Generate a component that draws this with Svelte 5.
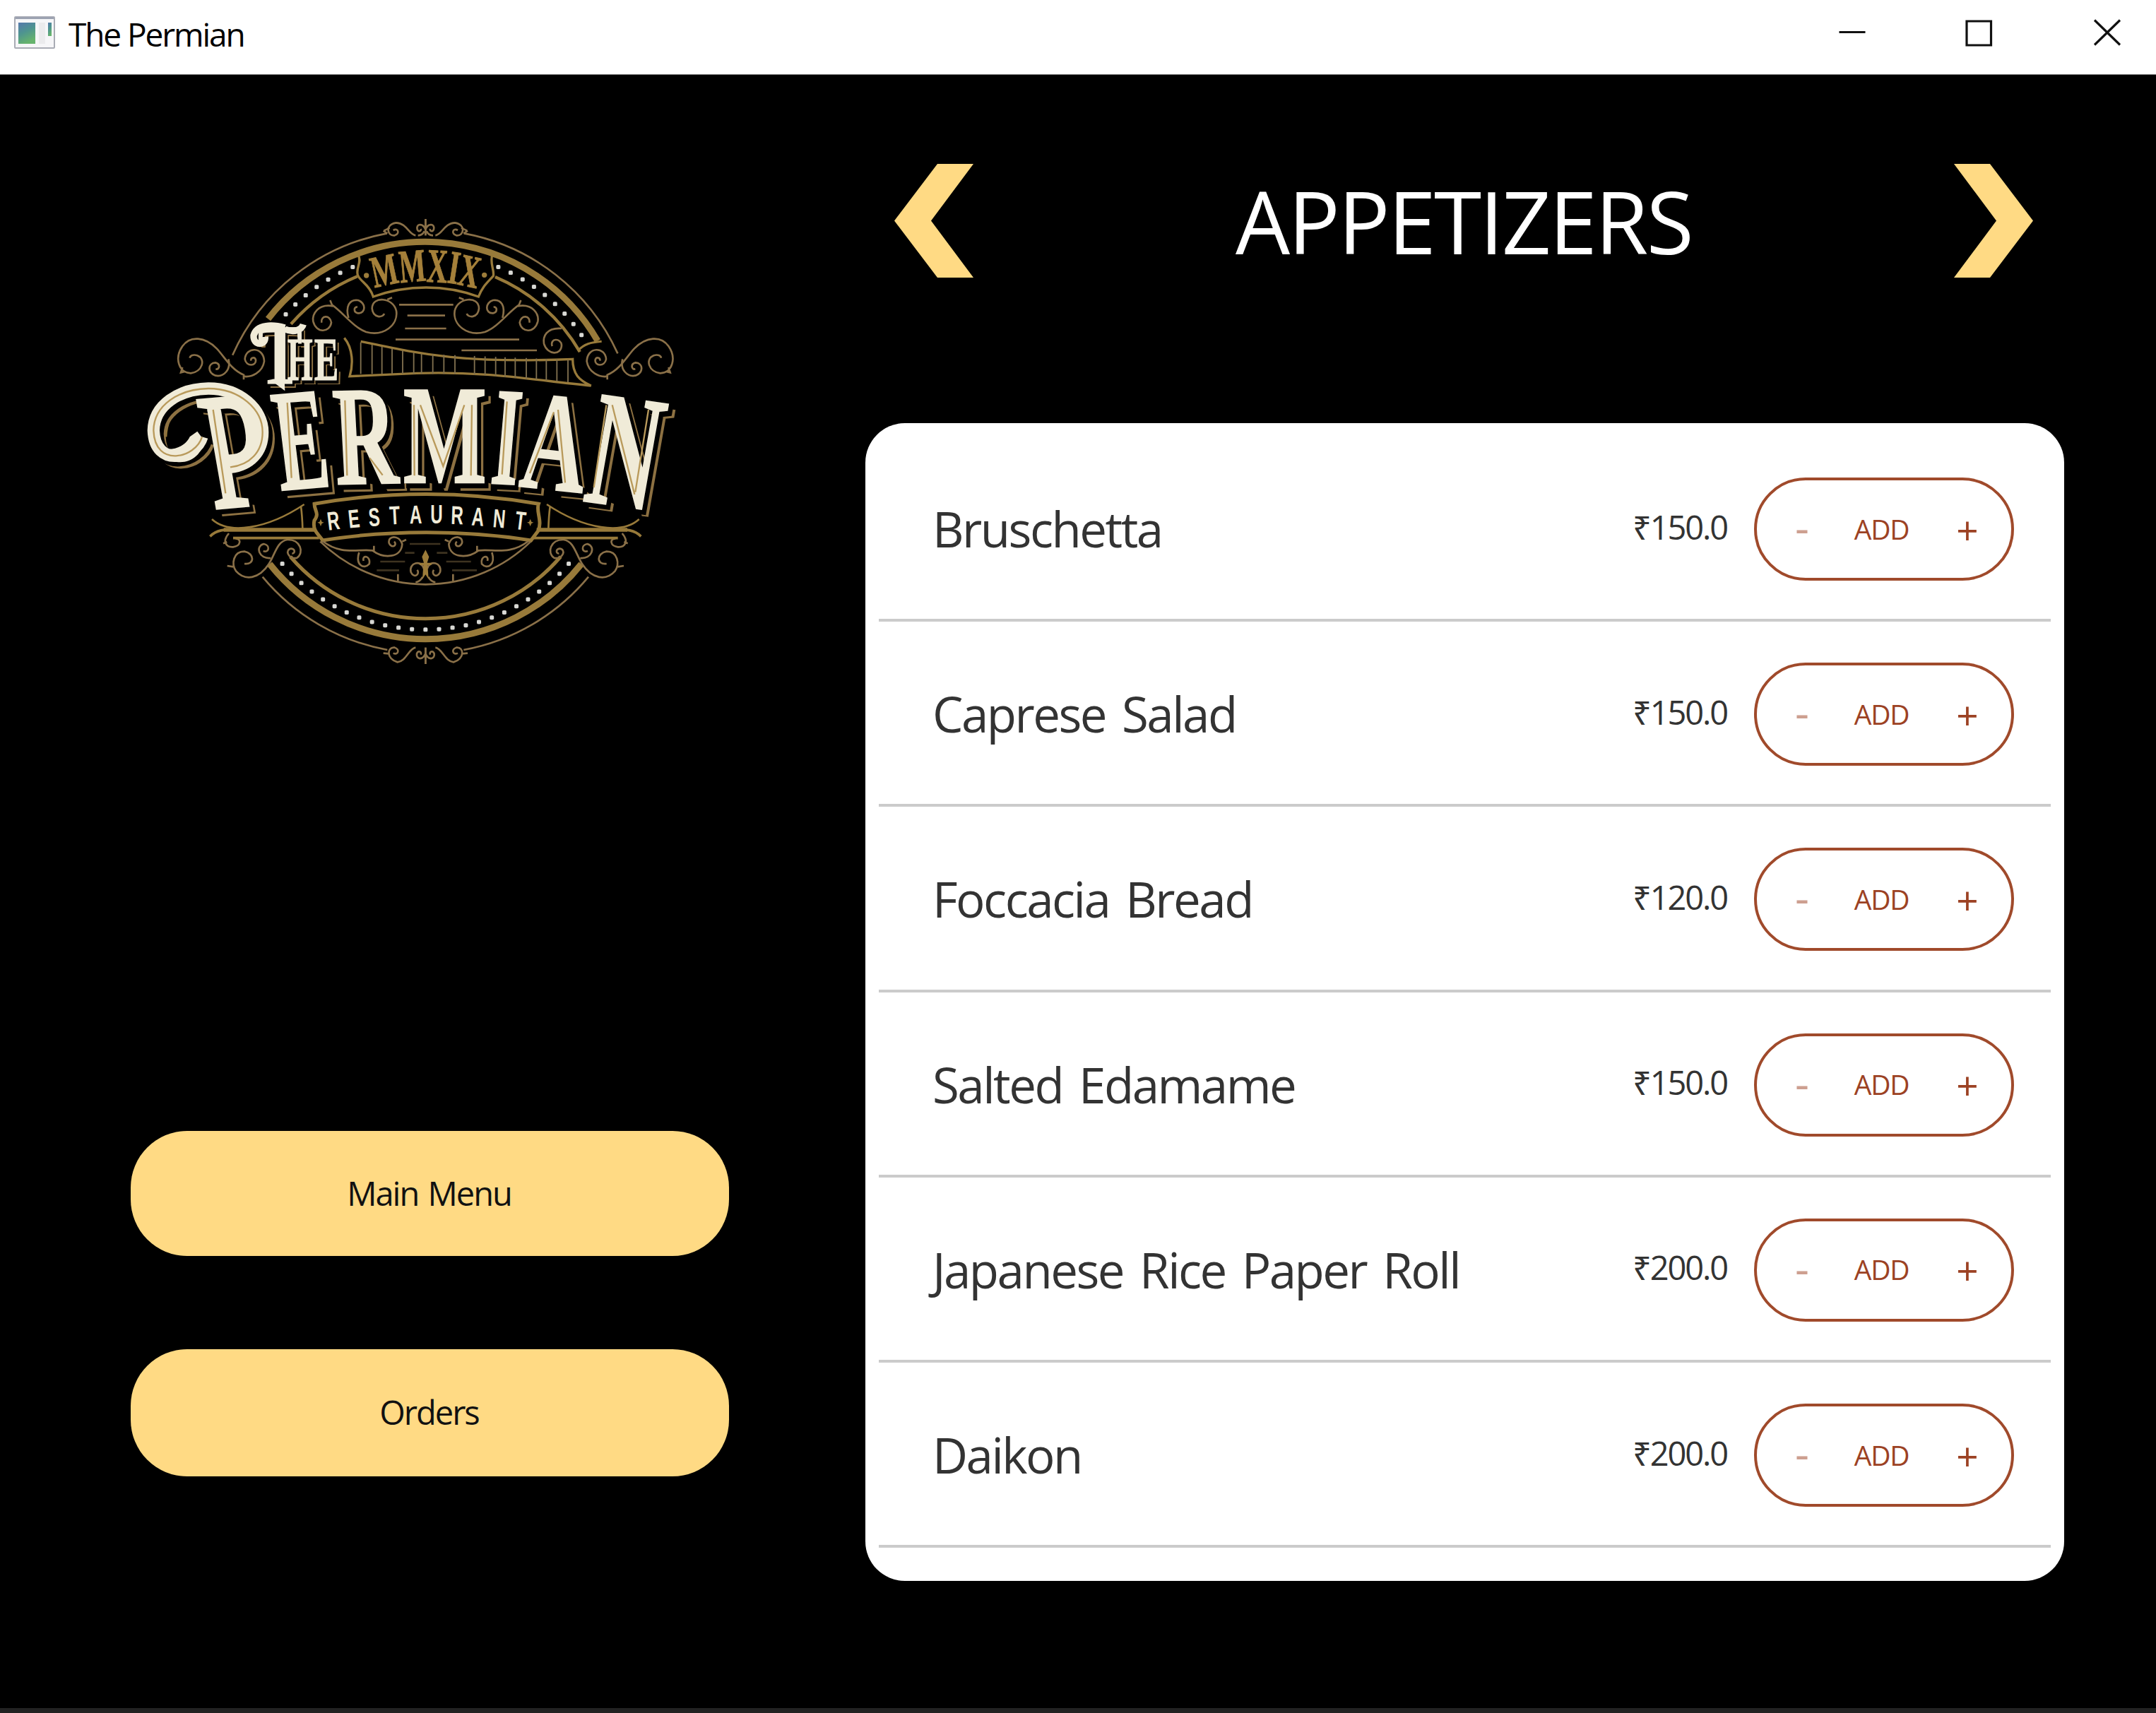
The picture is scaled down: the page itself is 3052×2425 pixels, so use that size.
<script>
  const items = [
    { name: 'Bruschetta', price: '150.0' },
    { name: 'Caprese Salad', price: '150.0' },
    { name: 'Foccacia Bread', price: '120.0' },
    { name: 'Salted Edamame', price: '150.0' },
    { name: 'Japanese Rice Paper Roll', price: '200.0' },
    { name: 'Daikon', price: '200.0' }
  ];

  // Emblem geometry: concentric rings around one centre
  const CX = 1237;
  const CY = 1003;
  const at = (deg, r) => {
    const a = (deg * Math.PI) / 180;
    return [CX + r * Math.cos(a), CY - r * Math.sin(a)];
  };
  const arc = (from, to, r) => {
    const [x1, y1] = at(from, r);
    const [x2, y2] = at(to, r);
    return `M${x1} ${y1} A${r} ${r} 0 0 1 ${x2} ${y2}`;
  };
  const run = (from, to, n) =>
    Array.from({ length: n }, (_, i) => at(from + ((to - from) * i) / (n - 1), 801));
  const beads = [...run(137.8, 112.7, 7), ...run(67.3, 34.2, 9), ...run(-40.6, -139.4, 25)];

  // Lettering: c = character, x/y = baseline start, w = width, h = cap height, r = rotation, k = skew
  const permian = [
    { c: 'P', x: 336, y: 1286, w: 262, h: 456, r: -5, k: 5, light: true },
    { c: 'E', x: 622, y: 1213, w: 222, h: 405, r: -5, k: 2 },
    { c: 'R', x: 858, y: 1186, w: 268, h: 393, r: -1, k: 2 },
    { c: 'M', x: 1142, y: 1180, w: 354, h: 393, r: 0, k: 0 },
    { c: 'I', x: 1508, y: 1182, w: 116, h: 390, r: 3, k: -2 },
    { c: 'A', x: 1630, y: 1194, w: 276, h: 392, r: 6, k: 0 },
    { c: 'N', x: 1900, y: 1256, w: 298, h: 456, r: 8, k: -2 }
  ];
  const the = [
    { c: 'T', x: 524, y: 758, w: 190, h: 238, r: 0, k: 0 },
    { c: 'H', x: 650, y: 744, w: 108, h: 172, r: 0, k: 0 },
    { c: 'E', x: 764, y: 744, w: 104, h: 172, r: 0, k: 0 }
  ];
  const year = [
    { c: 'M', x: 1020, y: 352, w: 112, h: 124, r: -12, k: 0 },
    { c: 'M', x: 1131, y: 331, w: 112, h: 130, r: -5, k: 0 },
    { c: 'X', x: 1240, y: 326, w: 88, h: 134, r: 3, k: 0 },
    { c: 'I', x: 1326, y: 329, w: 46, h: 132, r: 9, k: 0 },
    { c: 'X', x: 1368, y: 337, w: 88, h: 128, r: 12, k: 0 }
  ];
  const restaurant = [
    { c: 'R', x: 850, y: 1379, r: -7 },
    { c: 'E', x: 937, y: 1371, r: -6 },
    { c: 'S', x: 1022, y: 1364, r: -4 },
    { c: 'T', x: 1108, y: 1356, r: -3 },
    { c: 'A', x: 1196, y: 1353, r: -1 },
    { c: 'U', x: 1284, y: 1353, r: 0 },
    { c: 'R', x: 1370, y: 1356, r: 2 },
    { c: 'A', x: 1457, y: 1362, r: 4 },
    { c: 'N', x: 1547, y: 1370, r: 5 },
    { c: 'T', x: 1636, y: 1379, r: 7 }
  ];
  const cables = [
    962, 1010, 1052, 1095, 1140, 1187, 1220, 1268, 1315, 1362, 1445, 1490, 1535, 1575, 1618, 1665,
    1708, 1750, 1795, 1842
  ];
  const swash =
    'M288 985 C262 1075 88 1120 82 958 C84 850 190 782 315 780 C450 780 545 870 545 965 C545 1050 490 1105 408 1114';
</script>

{#snippet glyphs(list, cap)}
  {#each list as g}
    <text
      class:light={g.light}
      transform="translate({g.x} {g.y}) rotate({g.r}) skewX({g.k})"
      font-size={g.h / cap}
      textLength={g.w}
      lengthAdjust="spacingAndGlyphs">{g.c}</text>
  {/each}
{/snippet}

{#snippet flourishes()}
  <g class="fine">
    <path d="M1195 130 C1165 125 1158 78 1112 76 C1065 82 1072 134 1106 130 C1130 122 1120 96 1100 108" />
    <path d="M1060 110 L1085 98 M1075 122 L1058 110" />
    <path d="M1237 60 V130 M1237 104 C1225 76 1196 80 1202 104 C1208 118 1220 110 1217 102 M1205 130 C1220 130 1228 122 1232 112" />
    <path d="M465 742 V722 C410 700 380 640 350 610 C300 560 238 554 205 600 C170 650 188 712 240 715 C290 708 305 655 268 640 C250 634 238 640 236 650 M205 690 L198 712 L215 708" />
    <path d="M400 655 C412 700 380 732 345 725 C310 712 312 672 345 670 C368 675 362 702 346 697" />
    <path d="M462 728 C500 735 545 710 552 665 C550 600 474 602 470 655 C475 688 520 686 516 658 C512 644 494 648 496 662" />
    <path d="M845 430 C780 418 755 465 760 495 C772 545 830 545 837 500 C832 464 790 470 796 500" />
    <path d="M832 405 L840 425 C885 455 930 520 985 540 C1060 560 1122 510 1113 450 C1100 392 1010 385 1010 440 C1014 482 1056 480 1062 462 M1075 402 L1095 394" />
    <path d="M910 480 C896 430 915 400 950 405 C985 415 985 462 950 460 C930 455 932 432 948 434" />
    <path d="M402 1395 C372 1430 390 1455 420 1453 C455 1448 455 1416 430 1418 M378 1438 L394 1432" />
    <path d="M468 1524 C512 1530 512 1480 468 1472 C420 1472 412 1525 432 1555 C470 1598 530 1590 572 1525 C600 1480 606 1430 650 1422 C706 1420 724 1478 690 1500 C652 1506 638 1462 668 1460 C686 1464 682 1482 670 1480 M395 1533 L425 1538" />
    <path d="M580 1500 C530 1506 512 1450 550 1440 C580 1446 572 1480 548 1470" />
    <path d="M800 1428 C880 1490 950 1460 1012 1468 C1060 1504 1135 1500 1138 1440 C1124 1400 1076 1404 1082 1436 C1092 1462 1120 1446 1104 1430 M1138 1430 L1155 1422 M1018 1470 V1448" />
    <path d="M955 1476 C938 1530 975 1550 998 1525 C1006 1490 966 1484 974 1512" />
    <path d="M1120 1598 V1568 M1225 1580 C1215 1598 1205 1602 1195 1603" />
    <path d="M1230 1545 C1218 1505 1165 1520 1175 1560 C1188 1588 1215 1570 1202 1550" />
    <path d="M1195 1880 C1165 1885 1155 1938 1118 1942 C1070 1930 1072 1876 1106 1880 C1130 1888 1120 1914 1100 1904 M1058 1904 L1080 1906" />
    <path d="M1237 1950 V1880 M1237 1906 C1225 1936 1196 1930 1200 1906 C1206 1890 1222 1898 1217 1910" />
  </g>
  <g class="gold">
    <path stroke-width="8" d="M330 1335 C400 1400 560 1380 722 1272 M708 1280 C712 1310 714 1340 715 1375" />
    <path stroke-width="16" d="M380 1380 H765" />
    <path stroke-width="11" d="M322 1408 C350 1380 380 1378 440 1380" />
    <path stroke-width="11" d="M420 1415 H785" />
  </g>
{/snippet}

<div class="window">
  <header class="titlebar">
    <svg class="app-icon" viewBox="0 0 58 46">
      <defs>
        <linearGradient id="pane" x1="0" y1="0" x2=".4" y2="1">
          <stop offset="0" stop-color="#5578ad" />
          <stop offset=".5" stop-color="#4e9490" />
          <stop offset="1" stop-color="#66b36d" />
        </linearGradient>
      </defs>
      <rect x="1" y="1" width="56" height="44" rx="1" fill="#f6f6f8" stroke="#a9acb5" stroke-width="2" />
      <rect x="2" y="1" width="54" height="3" fill="#9da3b2" />
      <rect x="6" y="9" width="24" height="30" fill="url(#pane)" />
      <rect x="35" y="9" width="9" height="30" fill="#ebebed" />
      <rect x="48" y="9" width="5" height="19" fill="url(#pane)" />
    </svg>
    <span class="title">The Permian</span>
    <div class="controls">
      <svg viewBox="0 0 40 40"><path d="M2.5 21H39.5" /></svg>
      <svg viewBox="0 0 40 40"><path d="M2 5.5H36.5V39.5H2Z" /></svg>
      <svg viewBox="0 0 40 40"><path d="M2 4L38 39M38 4L2 39" /></svg>
    </div>
  </header>

  <main>
    <aside>
      <svg class="logo" viewBox="0 0 2400 2010">
        <g class="gold">
          <path stroke-width="27" d={arc(142.2, 30.2, 846)} />
          <path stroke-width="13" d={arc(139, 112.5, 757)} />
          <path stroke-width="13" d={arc(67, 30, 757)} />
          <path stroke-width="9" d="M1884 620 C1910 590 1940 584 1985 580" />
          <path stroke-width="27" d="M575 1525 A846 846 0 0 0 1899 1525" />
          <path stroke-width="15" d="M663 1494 A757 757 0 0 0 1811 1494" />
          <path stroke-width="10" d="M952 215 C968 245 938 270 950 300 C960 325 1000 340 1015 390 C1160 338 1320 338 1462 390 C1480 345 1500 330 1525 302 C1530 275 1510 250 1520 215" />
          <path stroke-width="15" d="M765 1270 C1080 1215 1400 1215 1717 1270 C1705 1300 1735 1345 1715 1385 L1685 1425 C1400 1380 1080 1380 800 1425 C785 1400 755 1385 765 1340 C788 1310 765 1300 765 1270Z" />
          <path stroke-width="10" d="M962 580 C1200 630 1380 675 1862 655 C1862 720 1890 745 1940 768 C1700 745 1500 705 1200 715 L915 728 C930 680 930 610 892 565" />
          <path stroke-width="8" d="M135 985 C140 870 240 780 400 805" />
        </g>
        <g class="fine">
          <path d={arc(156, 100.5, 897)} />
          <path d={arc(79.5, 24.5, 897)} />
          <path d="M545 1580 A900 900 0 0 0 1075 1890" />
          <path d="M1399 1890 A900 900 0 0 0 1929 1580" />
          <path d="M790 1430 A640 640 0 0 0 1684 1430" />
          <path d="M1125 424H1355M1160 470H1320M1150 525H1325M1110 572H1635M1390 618H1710" />
          <path d="M1815 525 C1750 520 1735 560 1740 590 C1755 640 1815 640 1815 595 C1812 565 1764 565 1775 600" />
          <path opacity=".45" d="M1170 1440H1300M1150 1478H1190M1285 1478H1330M1045 1515H1150M1325 1515H1430M1030 1552H1125M1350 1552H1455" />
        </g>
        <g class="cable">
          {#each cables as x}
            <path d="M{x} {x < 1200 ? 585 + (x - 962) * 0.19 : 632 + (x - 1200) * 0.04}V{x < 1400 ? 718 : 718 + (x - 1400) * 0.08}" />
          {/each}
        </g>

        {@render flourishes()}
        <g transform="translate(2474 0) scale(-1 1)">{@render flourishes()}</g>

        <path class="solid" d="M1237 1465 L1252 1495 L1244 1520 H1262 V1530 H1246 L1250 1590 L1237 1570 L1224 1590 L1228 1530 H1212 V1520 H1230 L1222 1495Z" />
        <circle class="solid" cx="986" cy="300" r="11" />
        <circle class="solid" cx="1487" cy="298" r="11" />
        <path class="solid" d="M792 1334l5 12 9 3-9 4-5 12-5-12-9-4 9-3ZM1682 1334l5 12 9 3-9 4-5 12-5-12-9-4 9-3Z" />

        {#each beads as [x, y]}
          <rect class="bead" x={x - 9} y={y - 9} width="18" height="18" rx="5" />
        {/each}

        <g class="year">{@render glyphs(year, 0.655)}</g>

        <!-- drop outline, black separation, then the cream face -->
        <g class="drop" transform="translate(26 28)">
          <path d={swash} />
          {@render glyphs(permian, 0.655)}
        </g>
        <g class="gap" transform="translate(13 15)">
          <path d={swash} />
          {@render glyphs(permian, 0.655)}
        </g>
        <g class="drop small" transform="translate(14 16)">{@render glyphs(the, 0.655)}</g>
        <g class="gap small" transform="translate(6 8)">{@render glyphs(the, 0.655)}</g>
        <g class="face">
          <path d={swash} />
          <path class="blob" d="M268 962 L296 1000 C290 1060 240 1100 180 1092 C130 1085 95 1050 80 1010 C130 1060 215 1035 236 985Z" />
          {@render glyphs(permian, 0.655)}
        </g>
        <g class="face small">
          <path d="M640 522 C590 508 520 505 507 555 C505 600 560 600 556 560" />
          <path d="M640 528 C680 545 712 530 718 508" />
          <path class="blob" d="M586 740 H638 L640 790 L590 752Z" />
          {@render glyphs(the, 0.655)}
        </g>
        <g class="inline">
          <path d={swash} />
          <path d="M335 870 L388 1225M650 840 L668 1160M895 830 L904 1150M1188 850 L1190 1150M1215 850 L1312 1110 L1402 850M1434 850 L1430 1150M1583 835 L1562 1145M1782 880 L1680 1140M1800 870 L1830 1180M2005 850 L1952 1200M2030 850 L2125 1230M2184 870 L2128 1220M1000 1075 L1055 1148" />
        </g>

        <g class="rest">
          {#each restaurant as g}
            <text transform="translate({g.x} {g.y}) rotate({g.r}) scale(.66 1)" text-anchor="middle">{g.c}</text>
          {/each}
        </g>
      </svg>

      <nav>
        <button class="main-menu">Main Menu</button>
        <button class="orders">Orders</button>
      </nav>
    </aside>

    <section>
      <div class="category">
        <svg class="arrow" viewBox="0 0 112 161"><path d="M61 0H112L52 80.5L112 161H61L0 80.5Z" /></svg>
        <h1>APPETIZERS</h1>
        <svg class="arrow" viewBox="0 0 112 161"><path d="M51 0H0L60 80.5L0 161H51L112 80.5Z" /></svg>
      </div>

      <ul>
        {#each items as item}
          <li>
            <span class="name">{item.name}</span>
            <span class="price">₹{item.price}</span>
            <div class="pill">
              <span class="minus">-</span>
              <span class="add">ADD</span>
              <span class="plus">+</span>
            </div>
          </li>
        {/each}
      </ul>
    </section>
  </main>
  <footer></footer>
</div>

<style>
  :global(body) {
    margin: 0;
    background: #000;
  }
  .window {
    width: 3052px;
    height: 2425px;
    display: flex;
    flex-direction: column;
    background: #000;
    font-family: 'Open Sans', 'Noto Sans', sans-serif;
    overflow: hidden;
  }
  .titlebar {
    box-sizing: border-box;
    height: 106px;
    flex: none;
    display: flex;
    align-items: flex-start;
    padding: 23px 49px 0 20px;
    background: #fff;
    border-bottom: 1px solid #777;
  }
  .app-icon {
    width: 58px;
    height: 46px;
  }
  .title {
    margin-left: 19px;
    font-size: 46px;
    line-height: 50px;
    letter-spacing: -2.1px;
    color: #000;
    white-space: nowrap;
  }
  .controls {
    display: flex;
    gap: 141px;
    margin-left: auto;
  }
  .controls svg {
    width: 40px;
    height: 43px;
    fill: none;
    stroke: #111;
    stroke-width: 3.2;
  }
  main {
    flex: 1;
    display: flex;
  }
  aside {
    width: 1225px;
    flex: none;
    display: flex;
    flex-direction: column;
  }
  .logo {
    width: 800px;
    height: 670px;
    margin: 184px 0 0 190px;
    flex: none;
    overflow: visible;
  }
  nav {
    display: flex;
    flex-direction: column;
    gap: 132px;
    margin: 641px 0 0 185px;
    width: 847px;
  }
  button {
    border: 0;
    padding: 0 2px 2px 0;
    border-radius: 80px;
    background: #ffda84;
    color: #111;
    font: 47px 'Open Sans', 'Noto Sans', sans-serif;
    letter-spacing: -2px;
    word-spacing: 3px;
  }
  .main-menu {
    height: 177px;
  }
  .orders {
    height: 180px;
  }
  section {
    width: 1697px;
    display: flex;
    flex-direction: column;
  }
  .category {
    display: flex;
    align-items: center;
    justify-content: space-between;
    height: 161px;
    margin: 126px 44px 206px 41px;
  }
  .arrow {
    width: 112px;
    height: 161px;
    fill: #ffda84;
  }
  h1 {
    margin: 0;
    font-weight: 400;
    font-size: 122px;
    line-height: 160px;
    letter-spacing: -2.7px;
    color: #fff;
  }
  ul {
    list-style: none;
    box-sizing: border-box;
    height: 1639px;
    margin: 0;
    padding: 19px 19px 0;
    border-radius: 56px;
    background: #fff;
  }
  li {
    box-sizing: border-box;
    height: 262.2px;
    display: flex;
    align-items: center;
    padding: 4px 52px 0 76px;
    border-bottom: 4px solid #cbcbcb;
    color: #333;
  }
  .name {
    margin-top: -2px;
    font-size: 69px;
    letter-spacing: -2.5px;
    word-spacing: 7.5px;
    white-space: nowrap;
  }
  .price {
    margin: -7px 38px 0 auto;
    font-size: 47px;
    letter-spacing: -2.1px;
  }
  .pill {
    box-sizing: border-box;
    width: 368px;
    height: 146px;
    display: grid;
    grid-template-columns: 128px 97px 1fr;
    align-items: center;
    justify-items: center;
    border: 4px solid #a04a2b;
    border-radius: 73px;
    color: #9c4224;
    font-size: 39px;
  }
  .add {
    margin-top: -2px;
    letter-spacing: -1.3px;
  }
  .minus {
    margin-top: -6px;
    opacity: 0.5;
    font-size: 62px;
    line-height: 62px;
  }
  .plus {
    padding-left: 11px;
    font-size: 55px;
    line-height: 55px;
  }
  footer {
    height: 7px;
    flex: none;
    background: #222;
  }

  .gold {
    fill: none;
    stroke: #987a3a;
  }
  .fine {
    fill: none;
    stroke: #8a7048;
    stroke-width: 8;
  }
  .cable {
    stroke: #80704f;
    stroke-width: 5.5;
  }
  .solid {
    fill: #9c7c3a;
  }
  .bead {
    fill: #d8d8d4;
  }
  .logo text {
    font-family: 'Liberation Serif', serif;
    font-weight: 700;
  }
  .logo text.light {
    font-weight: 400;
  }
  .year {
    fill: #a5803a;
    stroke: #a5803a;
    stroke-width: 3;
  }
  .drop {
    fill: #8d7142;
    stroke: #8d7142;
    stroke-width: 10;
  }
  .gap {
    fill: #000;
    stroke: #000;
    stroke-width: 20;
  }
  .face {
    fill: #f0ebd8;
    stroke: #f0ebd8;
    stroke-width: 7;
  }
  .drop .light,
  .face .light {
    stroke-width: 20;
  }
  .gap .light {
    stroke-width: 30;
  }
  .drop.small {
    stroke-width: 6;
  }
  .gap.small {
    stroke-width: 12;
  }
  .face.small {
    stroke-width: 3;
  }
  .drop > path,
  .gap > path,
  .face > path {
    fill: none;
    stroke-width: 52;
  }
  .gap > path {
    stroke-width: 60;
  }
  .face.small > path {
    stroke-width: 28;
  }
  .face .blob,
  .face.small .blob {
    fill: #f0ebd8;
    stroke: none;
  }
  .inline {
    fill: none;
    stroke: #b99a5b;
    stroke-width: 7;
  }
  .rest {
    fill: #f0ebd8;
  }
  .logo .rest text {
    font-family: 'Liberation Sans', sans-serif;
    font-size: 110px;
  }
</style>
